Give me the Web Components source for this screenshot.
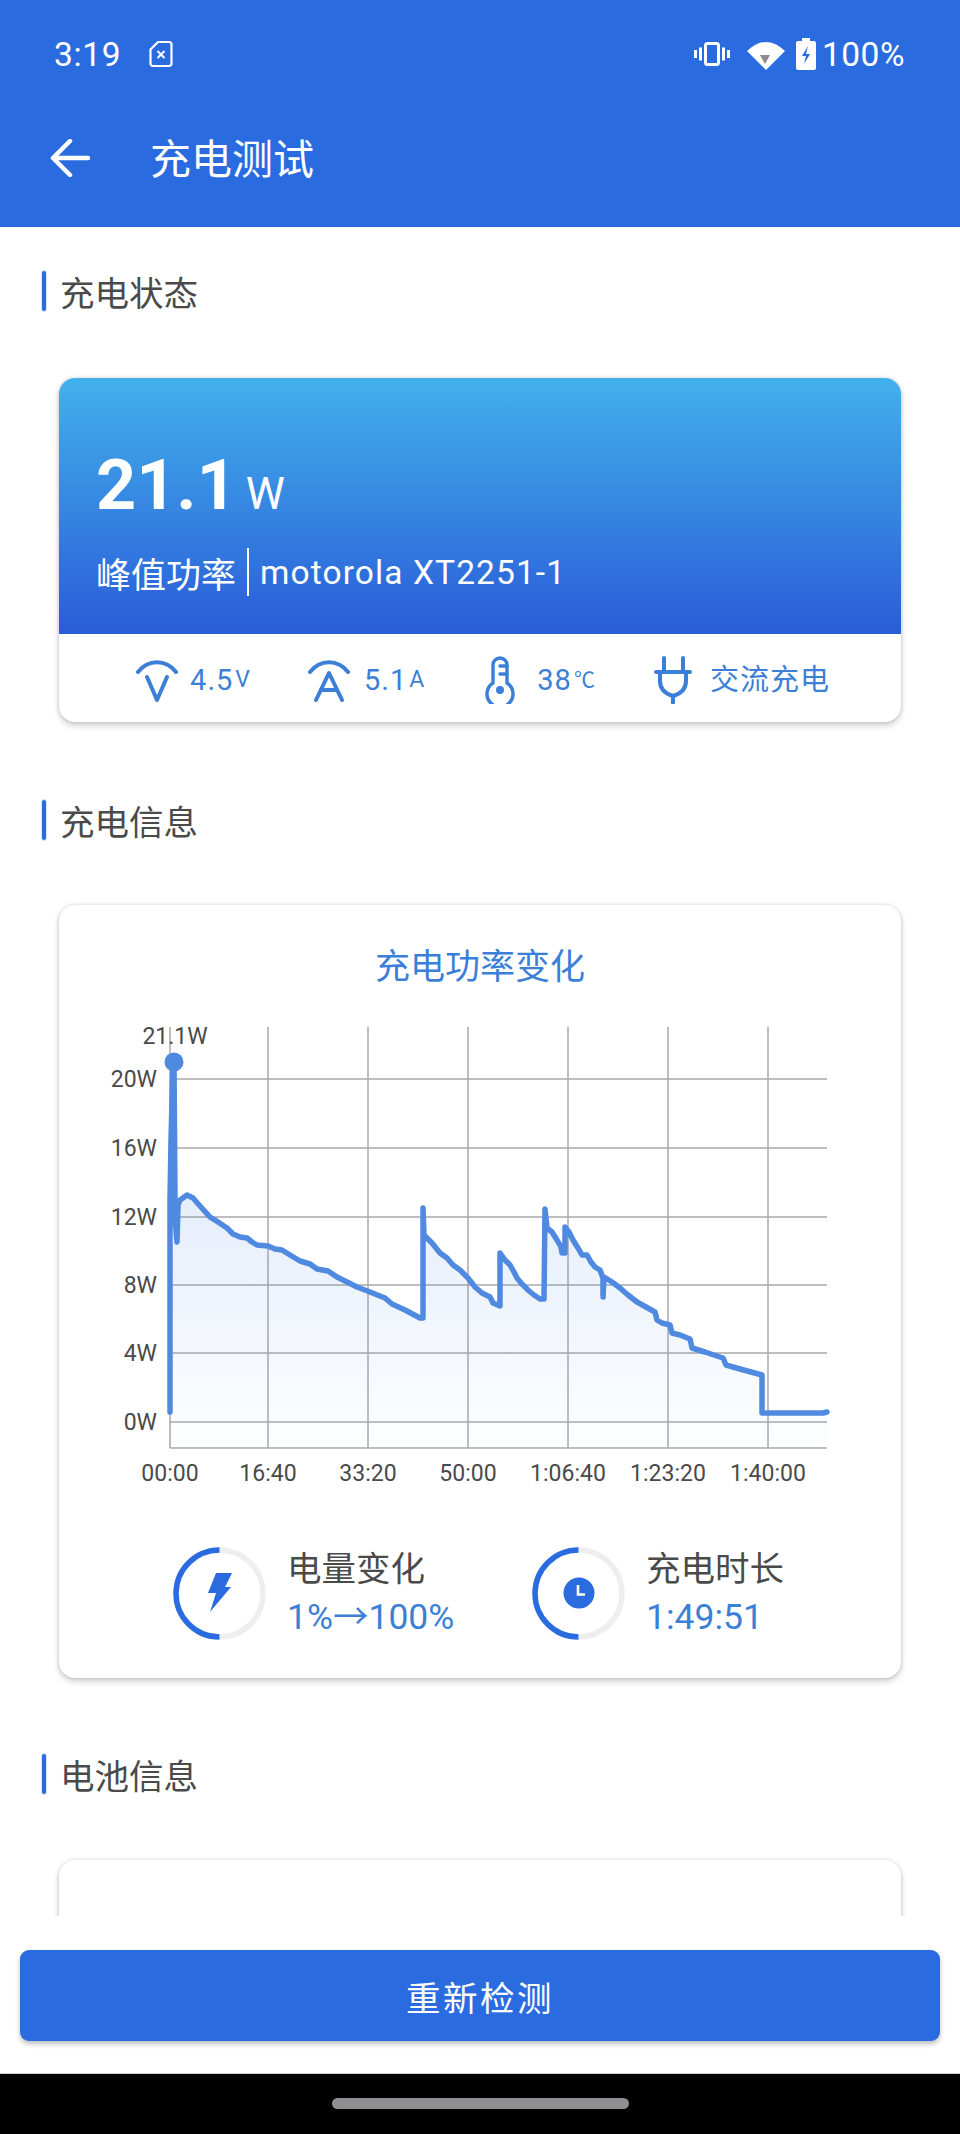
<!DOCTYPE html>
<html lang="zh">
<head>
<meta charset="utf-8">
<title>充电测试</title>
<style>
  html, body { margin: 0; padding: 0; background: #fff; }
  body { font-family: Roboto, "Noto Sans CJK SC", sans-serif; }
  charge-page { width: 960px; height: 2134px; }
</style>
</head>
<body>
<charge-page>
  <status-bar slot="top"></status-bar>
  <app-bar slot="top">充电测试</app-bar>

  <section-title gap="66">充电状态</section-title>
  <status-card>
    <span slot="power">21.1</span>
    <span slot="power-unit">W</span>
    <span slot="label">峰值功率</span>
    <span slot="device">motorola XT2251-1</span>
    <stat-item slot="stats" icon="volt" class="volt">4.5<span slot="unit">V</span></stat-item>
    <stat-item slot="stats" icon="amp">5.1<span slot="unit">A</span></stat-item>
    <stat-item slot="stats" icon="temp" class="temp">38<span slot="unit">℃</span></stat-item>
    <stat-item slot="stats" icon="plug" class="plain">交流充电</stat-item>
  </status-card>

  <section-title gap="64">充电信息</section-title>
  <info-card heading="充电功率变化">
    <power-chart></power-chart>
    <ring-stat slot="rings" icon="bolt" label="电量变化">1%→100%</ring-stat>
    <ring-stat slot="rings" icon="clock" label="充电时长">1:49:51</ring-stat>
  </info-card>

  <section-title gap="65">电池信息</section-title>
  <empty-card></empty-card>

  <bottom-action slot="bottom">重新检测</bottom-action>
  <nav-bar slot="bottom"></nav-bar>
</charge-page>

<script>
const BLUE = '#2a6ce0';
const TEXT_BLUE = '#3b7fd6';
const CARD_SHADOW = '0 4px 6px rgba(0,0,0,.16), 0 0 4px rgba(0,0,0,.16)';

const icons = {
  volt: `<svg width="42" height="44" viewBox="0 0 42 44" fill="none" stroke="${TEXT_BLUE}" stroke-width="4" stroke-linecap="round" stroke-linejoin="round"><path d="M2 14C12 1 30 1 40 14"/><path d="M11 19l10 23 10-23"/></svg>`,
  amp: `<svg width="42" height="44" viewBox="0 0 42 44" fill="none" stroke="${TEXT_BLUE}" stroke-width="4" stroke-linecap="round" stroke-linejoin="round"><path d="M2 14C12 1 30 1 40 14"/><path d="M8 42l13-27 13 27"/><path d="M13 32h16"/></svg>`,
  temp: `<svg width="30" height="48" viewBox="0 0 30 48" fill="none" stroke="${TEXT_BLUE}" stroke-width="3.4" stroke-linecap="round"><path d="M8 27V9a7 7 0 0 1 14 0v18a13 13 0 1 1-14 0z"/><path d="M15 10h7M15 18h7"/><circle cx="15" cy="34" r="4" fill="${TEXT_BLUE}" stroke="none"/></svg>`,
  plug: `<svg width="40" height="48" viewBox="0 0 40 48" fill="none" stroke="${TEXT_BLUE}" stroke-width="4" stroke-linecap="round" stroke-linejoin="round"><path d="M11 2v12M30 2v12"/><path d="M3 16h34"/><path d="M7 17v8c0 9 6 13 13 15 7-2 13-6 13-15v-8"/><path d="M20 40v7"/></svg>`,
  bolt: `<svg width="24" height="40" viewBox="0 0 24 40"><path d="M8 0h16l-7 14h6L2 39l6-19H0z" fill="${BLUE}"/></svg>`,
  clock: `<svg width="32" height="32" viewBox="0 0 32 32"><circle cx="16" cy="16" r="15.5" fill="${BLUE}"/><path d="M15 8v9.5h7" fill="none" stroke="#fff" stroke-width="2.6"/></svg>`
};

class ChargePage extends HTMLElement {
  constructor() {
    super();
    this.attachShadow({ mode: 'open' }).innerHTML = `
      <style>
        :host { display: flex; flex-direction: column; overflow: hidden; background: #fff; }
        .scroll { flex: 1; min-height: 0; overflow: hidden; padding-top: 43px; }
      </style>
      <slot name="top"></slot>
      <div class="scroll"><slot></slot></div>
      <slot name="bottom"></slot>`;
  }
}

class StatusBar extends HTMLElement {
  constructor() {
    super();
    this.attachShadow({ mode: 'open' }).innerHTML = `
      <style>
        :host { display: flex; align-items: center; height: 78px; padding: 0 55px 0 54px; background: ${BLUE};
          color: #fff; font: 400 33.500px Roboto, sans-serif; box-sizing: border-box; }
        .time { letter-spacing: .7px; margin-right: 28px; margin-top: 30px; }
        .right { margin-left: auto; display: flex; align-items: center; margin-top: 30px; }
        svg { display: block; }
        .pct { margin-left: 6px; letter-spacing: .5px; }
        .sim { margin-top: 30px; }
      </style>
      <span class="time">3:19</span>
      <svg class="sim" width="24" height="28" viewBox="0 0 24 28" fill="none" stroke="#fff" stroke-width="2.2" stroke-linejoin="round"><path d="M9 2h11a2.5 2.5 0 0 1 2.5 2.5v19A2.5 2.5 0 0 1 20 26H4a2.5 2.5 0 0 1-2.5-2.5V9.500z"/><path d="M8.500 11l7 7M15.500 11l-7 7" stroke-width="2"/></svg>
      <div class="right">
        <svg width="36" height="24" viewBox="0 0 36 24" fill="none" stroke="#fff"><rect x="11.500" y="1.500" width="13" height="21" rx="2" stroke-width="3"/><path d="M6.500 5.500v13M1.500 8v8M29.500 5.500v13M34.500 8v8" stroke-width="3"/></svg>
        <svg style="margin-left:17px" width="38" height="31" viewBox="0 0 38 31"><path d="M0 12Q19-6 38 12L19 31z" fill="#fff"/><path d="M13 16h10l-5 9z" fill="#8a8a8a"/></svg>
        <svg style="margin-left:11px" width="20" height="32" viewBox="0 0 20 32"><path d="M6 0h8v3h4a2 2 0 0 1 2 2v25a2 2 0 0 1-2 2H2a2 2 0 0 1-2-2V5a2 2 0 0 1 2-2h4z" fill="#fff"/><path d="M12 8l-6 10h4l-2 8 6-10h-4z" fill="${BLUE}"/></svg>
        <span class="pct">100%</span>
      </div>`;
  }
}

class AppBar extends HTMLElement {
  constructor() {
    super();
    this.attachShadow({ mode: 'open' }).innerHTML = `
      <style>
        :host { display: flex; align-items: center; height: 149px; padding: 10px 0 0 50px; box-sizing: border-box; background: ${BLUE};
          color: #fff; font: 400 41px Roboto, "Noto Sans CJK SC", sans-serif; }
        svg { display: block; margin-right: 60px; }
        span { margin-top: -4px; }
      </style>
      <svg width="40" height="38" viewBox="0 0 40 38" fill="none" stroke="#fff" stroke-width="4.500" stroke-linecap="round" stroke-linejoin="round"><path d="M38 19H3M20 2L3 19l17 17"/></svg>
      <span><slot></slot></span>`;
  }
}

class SectionTitle extends HTMLElement {
  constructor() {
    super();
    this.attachShadow({ mode: 'open' }).innerHTML = `
      <style>
        :host { display: flex; align-items: center; height: 42px; margin: 0 0 ${this.getAttribute('gap')}px 42px; color: #4a4a4a;
          font: 400 34.500px Roboto, "Noto Sans CJK SC", sans-serif; }
        i { width: 4px; height: 40px; margin-right: 14px; border-radius: 3px; background: ${BLUE}; box-shadow: 0 0 0 1px #d8e4f8; }
      </style>
      <i></i><slot></slot>`;
  }
}

class StatusCard extends HTMLElement {
  constructor() {
    super();
    this.attachShadow({ mode: 'open' }).innerHTML = `
      <style>
        :host { display: block; width: 842px; height: 344px; margin: 0 0 77px 59px; border-radius: 16px; overflow: hidden; background: #fff;
          box-shadow: ${CARD_SHADOW}; font-family: Roboto, "Noto Sans CJK SC", sans-serif; }
        .hero { height: 256px; box-sizing: border-box; padding: 67px 0 0 37px; color: #fff;
          background: linear-gradient(#42b1eb, #2a5cd8); }
        .power { display: flex; align-items: baseline; height: 80px; line-height: 80px; font-size: 70px; font-weight: 700; }
        .unit { font-size: 44px; font-weight: 400; margin-left: 9px; }
        .sub { display: flex; align-items: center; margin-top: 23px; font-size: 35px; height: 48px; }
        .sub i { width: 2px; height: 48px; background: #fff; margin: 0 11px 0 11px; }
        .device { letter-spacing: 1.100px; font-size: 33.500px; }
        .stats { height: 88px; box-sizing: border-box; padding: 4px 0 0 6px; display: flex; justify-content: center; align-items: center; gap: 60px; }
      </style>
      <div class="hero">
        <div class="power"><slot name="power"></slot><span class="unit"><slot name="power-unit"></slot></span></div>
        <div class="sub"><slot name="label"></slot><i></i><span class="device"><slot name="device"></slot></span></div>
      </div>
      <div class="stats"><slot name="stats"></slot></div>`;
  }
}

class StatItem extends HTMLElement {
  constructor() {
    super();
    this.attachShadow({ mode: 'open' }).innerHTML = `
      <style>
        :host { display: flex; align-items: center; color: ${TEXT_BLUE}; font-size: 29px; letter-spacing: 1px; line-height: 48px; }
        .icon { display: flex; margin-right: 14px; }
        .unit { font-size: 23px; margin-left: 2px; letter-spacing: 0; }
        :host(.volt) { margin-left: 2px; margin-right: -2px; }
        :host(.volt) .icon { margin-right: 12px; }
        :host(.temp) { margin-left: 1px; }
        :host(.temp) .icon { margin-right: 22px; }
        :host(.temp) .unit { font-size: 21px; }
        :host(.plain) { margin-left: -2px; }
        :host(.plain) .icon { margin-right: 17px; }
      </style>
      <span class="icon">${icons[this.getAttribute('icon')]}</span>
      <slot></slot><span class="unit"><slot name="unit"></slot></span>`;
  }
}

class InfoCard extends HTMLElement {
  constructor() {
    super();
    this.attachShadow({ mode: 'open' }).innerHTML = `
      <style>
        :host { display: block; width: 842px; height: 773px; margin: 0 0 75px 59px; box-sizing: border-box; padding-top: 40px; border-radius: 16px; background: #fff;
          box-shadow: ${CARD_SHADOW}; font-family: Roboto, "Noto Sans CJK SC", sans-serif; }
        h2 { margin: 0 0 19px; height: 46px; line-height: 46px; text-align: center; font-size: 35px; font-weight: 400; color: ${TEXT_BLUE}; }
        .rings { display: flex; margin-top: 56px; padding-left: 114px; gap: 0; }
      </style>
      <h2>${this.getAttribute('heading')}</h2>
      <slot></slot>
      <div class="rings"><slot name="rings"></slot></div>`;
  }
}

// chart drawn in page coordinates, the viewBox sits at the card origin
const POWER_POINTS = `170,1412 170,1200 171,1140 173,1062 174,1062 175,1200 173,1100 175,1218 177,1242 178,1205 180,1200
  187,1195 193,1198 200,1206 210,1217 218,1222 227,1228 233,1234 240,1237 247,1238 252,1242 257,1245 268,1246 275,1249 282,1250
  290,1255 300,1261 310,1264 317,1269 328,1271 337,1277 347,1282 357,1287 370,1292 385,1298 392,1304 405,1310 420,1318 423,1318
  423,1208 424,1235 432,1243 440,1253 447,1258 453,1265 460,1270 468,1278 475,1287 482,1293 490,1297 493,1303 500,1306 500,1253
  505,1260 510,1265 514,1272 517,1278 522,1284 528,1290 534,1295 540,1299 544,1299 545,1209 547,1228 552,1232 557,1240 561,1247
  562,1253 565,1253 565,1227 569,1232 573,1240 578,1248 582,1255 587,1255 591,1262 595,1267 600,1270 603,1278 603,1297 604,1277
  612,1282 620,1288 628,1295 637,1302 646,1307 655,1312 657,1320 662,1323 670,1325 672,1333 680,1335 690,1339 692,1348 705,1352
  723,1358 726,1365 740,1369 762,1375 762,1413 790,1413 823,1413 827,1412`;

class PowerChart extends HTMLElement {
  constructor() {
    super();
    const rows = [[20, 1079], [16, 1148], [12, 1217], [8, 1285], [4, 1353], [0, 1422]];
    const cols = [[170, '00:00'], [268, '16:40'], [368, '33:20'], [468, '50:00'], [568, '1:06:40'], [668, '1:23:20'], [768, '1:40:00']];
    const hLines = rows.map(r => `<line x1="170" x2="827" y1="${r[1]}" y2="${r[1]}"/>`).join('');
    const vLines = cols.map(c => `<line x1="${c[0]}" x2="${c[0]}" y1="1027" y2="1448"/>`).join('');
    const yLabels = rows.map(r => `<text x="157" y="${r[1] + 8}" text-anchor="end">${r[0]}W</text>`).join('');
    const xLabels = cols.map(c => `<text x="${c[0]}" y="1481" text-anchor="middle">${c[1]}</text>`).join('');
    this.attachShadow({ mode: 'open' }).innerHTML = `
      <style>
        :host { display: block; height: 480px; }
        svg { display: block; }
        text { font: 400 23px Roboto, sans-serif; fill: #4a4a4a; }
      </style>
      <svg width="842" height="480" viewBox="59 1010 842 480">
        <defs>
          <linearGradient id="area" gradientUnits="userSpaceOnUse" x1="0" y1="1060" x2="0" y2="1448">
            <stop offset="0" stop-color="#4f8ae0" stop-opacity=".22"/>
            <stop offset="1" stop-color="#4f8ae0" stop-opacity=".01"/>
          </linearGradient>
        </defs>
        <g stroke="#a9a9a9" stroke-width="1.500">${hLines}${vLines}<line x1="170" x2="827" y1="1448" y2="1448"/></g>
        <polygon points="170,1448 ${POWER_POINTS} 827,1448" fill="url(#area)"/>
        <polyline points="${POWER_POINTS}" fill="none" stroke="#4f8ae0" stroke-width="5.500" stroke-linejoin="round" stroke-linecap="round"/>
        <circle cx="174" cy="1062" r="9.500" fill="#4f8ae0"/>
        <text x="175" y="1044" text-anchor="middle">21.1W</text>
        ${yLabels}${xLabels}
      </svg>`;
  }
}

class RingStat extends HTMLElement {
  constructor() {
    super();
    this.attachShadow({ mode: 'open' }).innerHTML = `
      <style>
        :host { display: flex; align-items: center; width: 359px; font-family: Roboto, "Noto Sans CJK SC", sans-serif; }
        .ring { position: relative; width: 93px; height: 93px; margin-right: 21px; flex: none; }
        .ring svg { display: block; }
        .ring span { position: absolute; inset: 0; display: flex; align-items: center; justify-content: center; }
        .label { font-size: 34.500px; color: #4a4a4a; line-height: 46px; }
        .value { font-size: 35.500px; color: ${TEXT_BLUE}; line-height: 46px; margin-top: 2px; }
      </style>
      <div class="ring">
        <svg width="93" height="93" viewBox="0 0 93 93" fill="none" stroke-width="5.500">
          <path d="M46.500 3A43.500 43.500 0 0 1 46.500 90" stroke="#eeeeee"/>
          <path d="M46.500 3A43.500 43.500 0 0 0 46.500 90" stroke="${BLUE}"/>
        </svg>
        <span>${icons[this.getAttribute('icon')]}</span>
      </div>
      <div>
        <div class="label">${this.getAttribute('label')}</div>
        <div class="value"><slot></slot></div>
      </div>`;
  }
}

class EmptyCard extends HTMLElement {
  constructor() {
    super();
    this.attachShadow({ mode: 'open' }).innerHTML = `
      <style>
        :host { display: block; width: 842px; height: 200px; margin-left: 59px; border-radius: 16px; background: #fff;
          box-shadow: ${CARD_SHADOW}; }
      </style>`;
  }
}

class BottomAction extends HTMLElement {
  constructor() {
    super();
    this.attachShadow({ mode: 'open' }).innerHTML = `
      <style>
        :host { display: block; height: 158px; box-sizing: border-box; padding: 34px 20px 0; background: #fff;
          border-bottom: 1px solid #d0d0d0; position: relative; }
        button { display: block; width: 100%; height: 91px; border: 0; border-radius: 9px; padding: 0; background: ${BLUE}; color: #fff;
          font: 400 34.500px Roboto, "Noto Sans CJK SC", sans-serif; letter-spacing: 2.500px; box-shadow: 0 3px 5px rgba(0,0,0,.25); }
      </style>
      <button><slot></slot></button>`;
  }
}

class NavBar extends HTMLElement {
  constructor() {
    super();
    this.attachShadow({ mode: 'open' }).innerHTML = `
      <style>
        :host { display: flex; justify-content: center; height: 60px; padding-top: 24px; box-sizing: border-box; background: #000; }
        i { width: 297px; height: 11px; border-radius: 6px; background: #8f8e90; }
      </style>
      <i></i>`;
  }
}

customElements.define('charge-page', ChargePage);
customElements.define('status-bar', StatusBar);
customElements.define('app-bar', AppBar);
customElements.define('section-title', SectionTitle);
customElements.define('status-card', StatusCard);
customElements.define('stat-item', StatItem);
customElements.define('info-card', InfoCard);
customElements.define('power-chart', PowerChart);
customElements.define('ring-stat', RingStat);
customElements.define('empty-card', EmptyCard);
customElements.define('bottom-action', BottomAction);
customElements.define('nav-bar', NavBar);
</script>
</body>
</html>
